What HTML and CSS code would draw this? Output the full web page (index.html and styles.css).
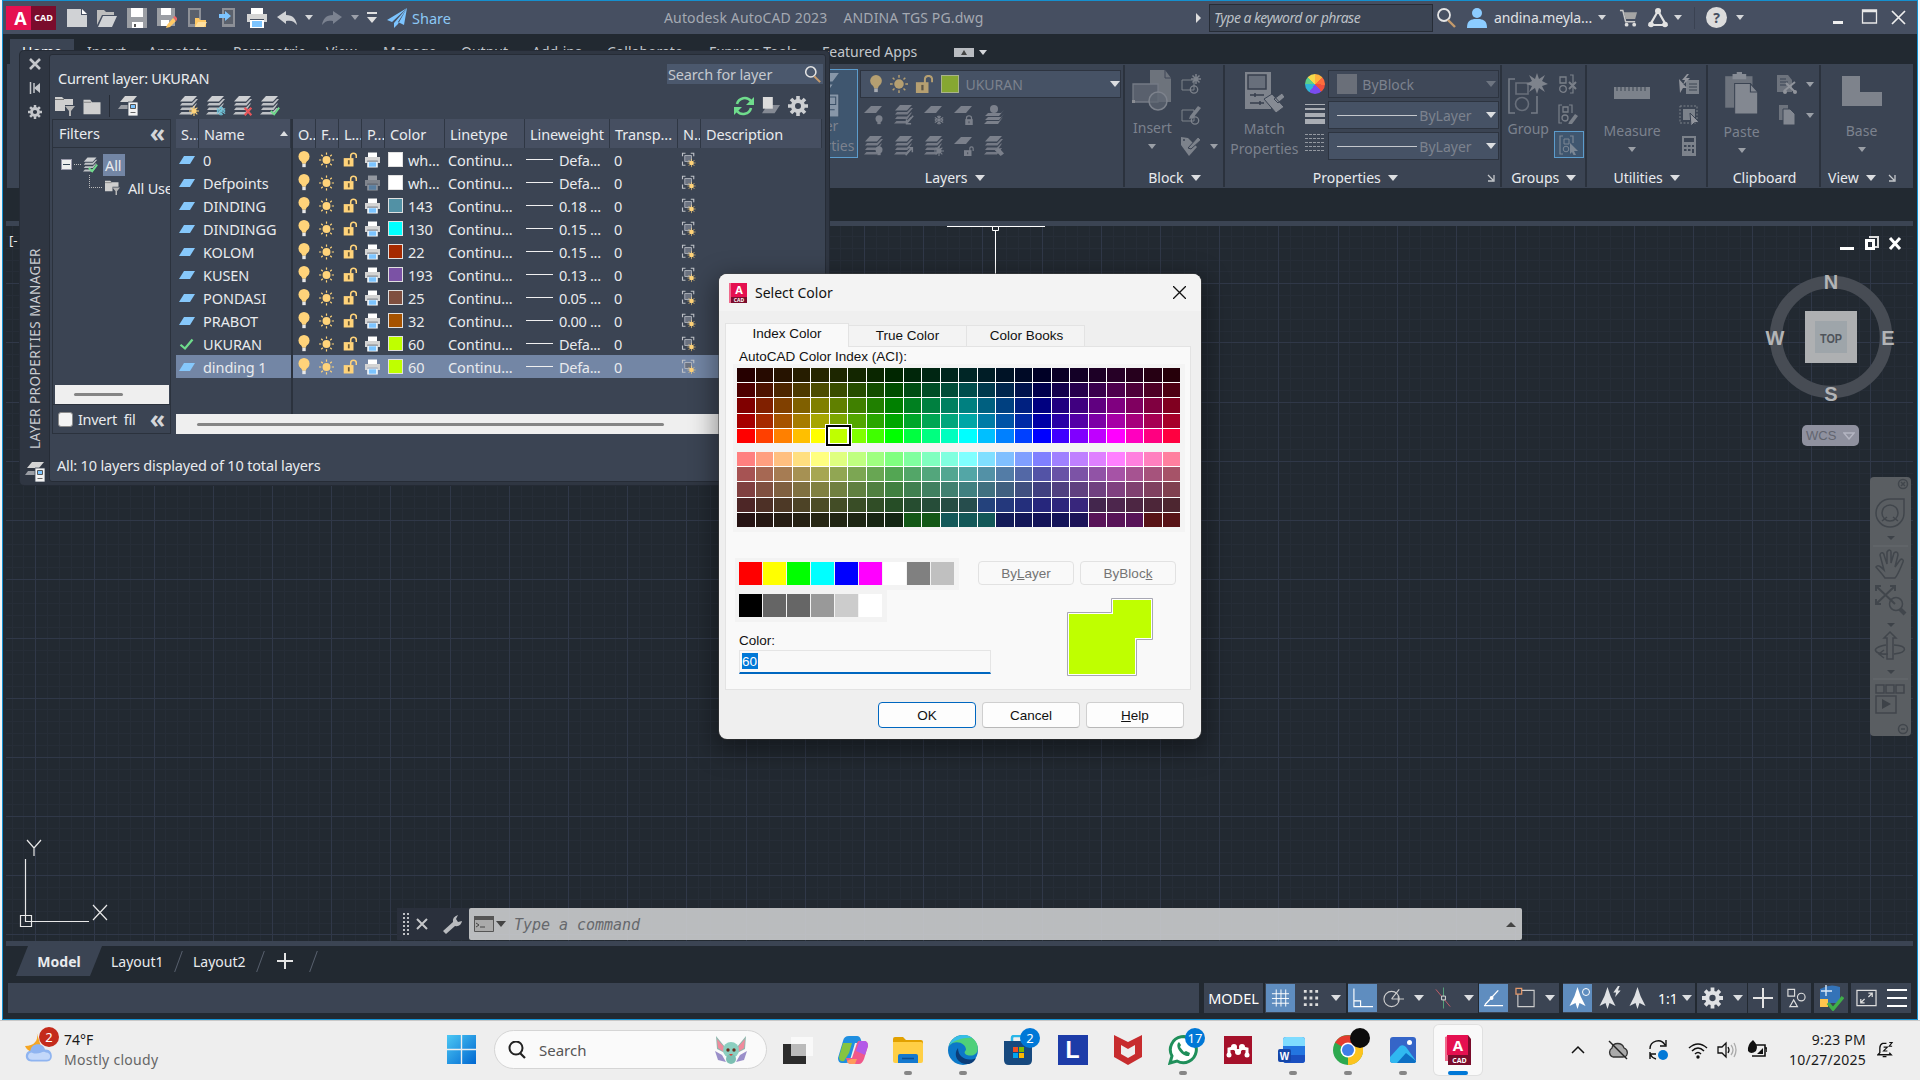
FILE: index.html
```html
<!DOCTYPE html>
<html lang="en">
<head>
<meta charset="utf-8">
<title>Autodesk AutoCAD 2023</title>
<link rel="stylesheet" href="styles.css">
</head>
<body>
<svg class="sprite" aria-hidden="true">
  <symbol id="new" viewBox="0 0 20 20"><path d="M0 1h14v6h6v12H0z" fill="currentColor"/><path d="M15 1l5 5h-5z" fill="#fff"/></symbol>
  <symbol id="open" viewBox="0 0 20 20"><path d="M0 2h7l2 2h8v3H5L0 17z" fill="#bdbdbd"/><path d="M6 8h14l-5 11H1z" fill="currentColor"/></symbol>
  <symbol id="save" viewBox="0 0 20 20"><path d="M0 0h20v20H0z" fill="#9b9ea4"/><path d="M4 0h12v9H4zM5 14h11v6H5z" fill="#fff"/><path d="M7 16h2v3H7z" fill="#555"/></symbol>
  <symbol id="saveas" viewBox="0 0 20 20"><path d="M0 0h18v18H0z" fill="#9b9ea4"/><path d="M4 0h10v7H4zM4 12h8v6H4z" fill="#fff"/><path d="M10 17l6-7 3 3-6 6-4 1z" fill="#ffc966"/><path d="M16 9l2-1 3 3-2 2z" fill="#e66"/></symbol>
  <symbol id="webopen" viewBox="0 0 20 20"><path d="M1 0h13v19H1z" fill="#8d9097"/><path d="M3 2h9v14H3z" fill="#5b616c"/><path d="M8 10h4l1 2h6v7H8z" fill="#ffc966"/><path d="M11 14h9l-3 5H8z" fill="#ffe09f"/></symbol>
  <symbol id="websave" viewBox="0 0 20 20"><path d="M5 0h13v19H5z" fill="#8d9097"/><path d="M7 2h9v14H7z" fill="#5b616c"/><path d="M2 6h6V3l6 5-6 5v-3H2z" fill="#7cc4ff"/></symbol>
  <symbol id="print" viewBox="0 0 20 20"><path d="M4 0h12v6H4z" fill="#fff"/><path d="M0 6h20v8h-3v-3H3v3H0z" fill="#d4d4d4"/><path d="M3 12h14v8H3z" fill="#fff"/><path d="M5 13h10v6H5z" fill="#7cc4ff"/></symbol>
  <symbol id="undo" viewBox="0 0 20 20"><path d="M0 9l9-6v4c7 0 10 4 11 10-3-4-6-5-11-4v3z" fill="currentColor"/></symbol>
  <symbol id="plane" viewBox="0 0 20 20"><path d="M20 0L0 12l5 2zM20 0l-3 17-6-3zM20 0L7 15v5l4-4z" fill="#7cc4ff"/></symbol>
  <symbol id="mag" viewBox="0 0 20 20"><circle cx="8" cy="7" r="6" fill="none" stroke="#e4e4e4" stroke-width="1.8"/><path d="M12 12l7 7" stroke="#c49a6c" stroke-width="2.4"/></symbol>
  <symbol id="user" viewBox="0 0 20 20"><circle cx="10" cy="5" r="5" fill="#8cccff"/><path d="M0 20c0-7 3-8 7-9h6c4 1 7 2 7 9z" fill="#8cccff"/></symbol>
  <symbol id="cart" viewBox="0 0 20 20"><path d="M1 2h3l3 12h10" fill="none" stroke="#c9c9c9" stroke-width="1.6"/><path d="M5 4h14l-2 7H7z" fill="#a5a5a5"/><circle cx="8" cy="17" r="2" fill="#ddd"/><circle cx="16" cy="17" r="2" fill="#ddd"/></symbol>
  <symbol id="adsk" viewBox="0 0 20 20"><path d="M10 3L2 17h16z" fill="none" stroke="#e2e2e2" stroke-width="2.2"/><circle cx="10" cy="3" r="3" fill="#e2e2e2"/><circle cx="3" cy="16.500" r="2.800" fill="#e2e2e2"/><circle cx="17" cy="16.500" r="2.800" fill="#e2e2e2"/></symbol>
  <symbol id="stack" viewBox="0 0 20 20"><path d="M6 0h12l-5 5.500H1z" fill="currentColor"/><path d="M3 7h10l4-4h2l-5.500 6.500H1zM3 11.500h10l4-4h1l-4.500 6.500H1zM2.500 16h10l4-4h1.500l-5 6.500H0z" fill="currentColor" opacity=".9"/></symbol>
  <symbol id="sheet" viewBox="0 0 20 20"><path d="M7 1h11l-6 7H0z" fill="currentColor"/></symbol>
  <symbol id="row-sheet" viewBox="0 0 16 8"><path d="M5 0h11l-5 8H0z" fill="#86c8fb"/></symbol>
  <symbol id="m-bulb" viewBox="0 0 10 12"><circle cx="5" cy="4.500" r="4.200" fill="currentColor"/><path d="M3 7h4v4H3z" fill="currentColor"/></symbol>
  <symbol id="m-sun" viewBox="0 0 12 12"><circle cx="6" cy="6" r="3" fill="currentColor"/><path d="M6 0v12M0 6h12M2 2l8 8M10 2l-8 8" stroke="currentColor" stroke-width="1.300"/></symbol>
  <symbol id="m-frz" viewBox="0 0 12 12"><path d="M6 .5v11M1 3l10 6M11 3L1 9M4 1.500l2 2 2-2M4 10.500l2-2 2 2M1 6l2-1M1 6l2 1M11 6L9 5M11 6L9 7" fill="none" stroke="currentColor" stroke-width="1.300"/></symbol>
  <symbol id="m-lock" viewBox="0 0 12 12"><path d="M3 6V3.500Q3 1 6 1t3 2.500V6" fill="none" stroke="currentColor" stroke-width="1.500"/><path d="M1.500 5h9v7h-9z" fill="currentColor"/><path d="M5.500 7.500h1v2.500h-1z" fill="#3b404f"/></symbol>
  <symbol id="m-unlock" viewBox="0 0 12 12"><path d="M7 6V3Q7 1 9 1t2 2v3" fill="none" stroke="currentColor" stroke-width="1.400"/><path d="M0 5h9v7H0z" fill="currentColor"/><path d="M4 7.500h1v2.500H4z" fill="#3b404f"/></symbol>
  <symbol id="m-in" viewBox="0 0 12 12"><path d="M11 1L4 9M3 5v5.500h5.500" fill="none" stroke="currentColor" stroke-width="1.800"/></symbol>
  <symbol id="m-out" viewBox="0 0 12 12"><path d="M2 11l7-8M4.500 2H10v5.500" fill="none" stroke="currentColor" stroke-width="1.800"/></symbol>
  <symbol id="m-match" viewBox="0 0 12 12"><path d="M1 5l5-3 6 7-4 3z" fill="currentColor"/></symbol>
  <symbol id="m-ok" viewBox="0 0 12 12"><path d="M1 6l4 4 6-8" fill="none" stroke="currentColor" stroke-width="2.200"/></symbol>
  <symbol id="m-del" viewBox="0 0 12 12"><path d="M2 2l8 9M10 2L2 11" stroke="currentColor" stroke-width="2.600"/></symbol>
  <symbol id="walk" viewBox="0 0 20 20"><path d="M4 8h13l3-3-5 6H1zM4 12h13l3-3-5 6H1zM3 16h12l4-4-5 7H0z" fill="currentColor"/><circle cx="10" cy="4" r="4" fill="currentColor"/><path d="M6 8h8l-2 3H4z" fill="currentColor"/></symbol>
  <symbol id="bulb" viewBox="0 0 14 20"><circle cx="7" cy="6.500" r="6.500" fill="#ffd37a"/><path d="M3 10h8l-2 5H5z" fill="#ffd37a"/><path d="M5 15h4v4H5z" fill="#e8e8e8"/></symbol>
  <symbol id="sun" viewBox="0 0 20 20"><circle cx="10" cy="10" r="5.300" fill="#ffd37a"/><path d="M10 0v3M10 17v3M0 10h3M17 10h3M3 3l2 2M15 15l2 2M17 3l-2 2M5 15l-2 2" stroke="#ffd37a" stroke-width="1.600"/></symbol>
  <symbol id="lock" viewBox="0 0 20 20"><path d="M11 9V5q0-4 4-4t4 4v3" fill="none" stroke="#ffd37a" stroke-width="2.200"/><path d="M1 8h14v12H1z" fill="#ffd37a"/><path d="M7 11h2.500v6H7z" fill="#6d5a34"/></symbol>
  <symbol id="vp" viewBox="0 0 20 20"><path d="M2 5V1h4M13 1h4v4M2 12v5h4" fill="none" stroke="#bfc2c8" stroke-width="1.500"/><path d="M5 4h9v8H5z" fill="#6b7280" stroke="#bfc2c8"/><circle cx="14" cy="14" r="3" fill="#ffd37a"/><path d="M14 8.500v11M8.500 14h11M10 10l8 8M18 10l-8 8" stroke="#ffd37a" stroke-width=".8"/></symbol>
  <symbol id="check" viewBox="0 0 20 20"><path d="M2 11l6 5L18 4" fill="none" stroke="#6fdc8c" stroke-width="3"/></symbol>
  <symbol id="gear" viewBox="0 0 20 20"><circle cx="10" cy="10" r="5" fill="none" stroke="currentColor" stroke-width="4"/><path d="M10 0v4M10 16v4M0 10h4M16 10h4M3 3l3 3M14 14l3 3M17 3l-3 3M6 14l-3 3" stroke="currentColor" stroke-width="3.600"/></symbol>
  <symbol id="filter" viewBox="0 0 20 20"><path d="M0 1h7l2 2h9v6H10v6H0z" fill="#cfcfcf"/><path d="M0 3.500h9" stroke="#777"/><path d="M10 10h10l-4 5v5h-2v-5z" fill="#b5b5b5"/></symbol>
  <symbol id="folder" viewBox="0 0 20 20"><path d="M0 2h8l2 3h10v14H0z" fill="#cfcfcf"/><path d="M0 5h9" stroke="#777"/></symbol>
  <symbol id="state" viewBox="0 0 20 20"><path d="M7 0h12l-5 6H2z" fill="#d4d4d4"/><path d="M3 9h7v4H0z" fill="#9a9da3"/><path d="M10 6h10v14H10z" fill="#f2f2f2" stroke="#3b4453" stroke-width=".8"/><path d="M12.500 8.500h5v4h-5z" fill="#7cc4ff" stroke="#555"/><path d="M12.500 16.500h5" stroke="#666"/></symbol>
  <symbol id="refresh" viewBox="0 0 20 20"><path d="M3 8a8 8 0 0 1 14-3M17 12a8 8 0 0 1-14 3" fill="none" stroke="#6fdc8c" stroke-width="2.600"/><path d="M20 1v8h-8zM0 19v-8h8z" fill="#6fdc8c"/></symbol>
  <symbol id="insert" viewBox="0 0 40 42"><path d="M18 0h15l6 8v24H18z" fill="#8d9096"/><path d="M33 0v8h6" fill="none" stroke="#41495a"/><path d="M1 14h25v18H1z" fill="#6c727d" stroke="#989ca5" stroke-width="1.300"/><circle cx="26" cy="31" r="9" fill="#747a85" fill-opacity=".7" stroke="#a5a8af" stroke-width="1.500"/><path d="M0 30h3v3H0z" fill="#bbb"/></symbol>
  <symbol id="blk1" viewBox="0 0 20 20"><path d="M1 6h12v10H1z" fill="none" stroke="currentColor"/><circle cx="13" cy="15.500" r="3.700" fill="none" stroke="currentColor" stroke-width="1.300"/><path d="M15 0v10M10 5h10M11.500 1.500l7 7M18.500 1.500l-7 7" stroke="currentColor" stroke-width="1.500"/></symbol>
  <symbol id="blk2" viewBox="0 0 20 20"><path d="M1 5h12v11H1z" fill="none" stroke="currentColor"/><circle cx="14" cy="15.500" r="3.700" fill="none" stroke="currentColor" stroke-width="1.300"/><path d="M9 11l8-10 3 2-8 10-4 1z" fill="currentColor"/></symbol>
  <symbol id="tag" viewBox="0 0 20 20"><path d="M0 1l7 1 9 9-8 9L0 9z" fill="currentColor"/><path d="M7 12L17 1l3 3-10 9z" fill="currentColor" stroke="#3b4453"/><circle cx="3" cy="4" r="1" fill="#3b4453"/></symbol>
  <symbol id="match" viewBox="0 0 40 42"><path d="M1 1h26v37H1z" fill="#a8aab0"/><path d="M4 4h18v14H4z" fill="#858a94" stroke="#353c4a" stroke-width="1.500"/><path d="M6 24h14M6 32h14M11 22v4M16 30v4" stroke="#353c4a" stroke-width="1.500"/><path d="M20 28l8-5 12 13-8 6zM30 28l8-6 3 4-7 6z" fill="#b5b7bc" stroke="#3b4453"/></symbol>
  <symbol id="groupic" viewBox="0 0 40 42"><path d="M7 7H1v34h6M23 41h6V24" fill="none" stroke="#999da6" stroke-width="1.600"/><path d="M8 11h12v11H8z" fill="none" stroke="#858a94" stroke-width="1.600"/><circle cx="14" cy="32" r="6.500" fill="none" stroke="#858a94" stroke-width="1.600"/><path d="M29 1l2 6 6-4-3 6 6 3-6 2 3 6-6-4-2 6-2-6-6 4 3-6-6-2 6-3-3-6 6 4z" fill="#a8aab0"/></symbol>
  <symbol id="grp-x" viewBox="0 0 20 20"><path d="M12 1h3v18h-3" fill="none" stroke="currentColor" stroke-width="1.200"/><path d="M2 3h6v6H2z" fill="none" stroke="currentColor" stroke-width="1.300"/><circle cx="5" cy="15" r="3.300" fill="none" stroke="currentColor" stroke-width="1.300"/><path d="M11 8l7 7M18 8l-7 7" stroke="currentColor" stroke-width="2"/></symbol>
  <symbol id="grp-edit" viewBox="0 0 20 20"><path d="M4 1H1v18h3M11 1h3v8" fill="none" stroke="currentColor" stroke-width="1.200"/><path d="M5 3h5v5H5z" fill="none" stroke="currentColor" stroke-width="1.300"/><circle cx="7" cy="14" r="3" fill="none" stroke="currentColor" stroke-width="1.300"/><path d="M11 18l6-8 3 2-6 8-4 1z" fill="currentColor"/></symbol>
  <symbol id="grp-sel" viewBox="0 0 20 20"><path d="M4 1H1v18h3M11 1h3v7" fill="none" stroke="currentColor" stroke-width="1.200"/><path d="M5 4h5v5H5z" fill="none" stroke="currentColor"/><circle cx="7" cy="14" r="2.800" fill="none" stroke="currentColor"/><path d="M11 8l8 8h-4l2 4-2 1-2-4-2 2z" fill="currentColor"/></symbol>
  <symbol id="paste" viewBox="0 0 32 40"><path d="M0 4h26v30H0z" fill="#8c9098"/><path d="M7 2h4V0h5v2h4v5H7z" fill="#b5b7bc"/><path d="M9 11h15l7 8v21H9z" fill="#b0b2b8" stroke="#3b4453"/><path d="M24 11v8h7" fill="none" stroke="#3b4453"/></symbol>
  <symbol id="copy" viewBox="0 0 20 20"><path d="M2 0h9v15H2z" fill="#8c9098"/><path d="M6 4h7l5 5v11H6z" fill="#b0b2b8" stroke="#3b4453"/></symbol>
  <symbol id="cut" viewBox="0 0 20 20"><path d="M0 1h11l4 5v12H0z" fill="#8c9098"/><path d="M3 5h6M3 8h8M3 11h6" stroke="#3b4453"/><path d="M7 17l11-9M9 9l9 9" stroke="#c5c5c8" stroke-width="2"/><circle cx="18" cy="18" r="2" fill="#c5c5c8"/><circle cx="8" cy="18" r="2" fill="#c5c5c8"/></symbol>
  <symbol id="quick" viewBox="0 0 20 20"><path d="M7 6h13v14H7z" fill="#a5a8ae"/><path d="M10 10h8M10 13h8M10 16h8" stroke="#3b4453"/><path d="M0 5l8 9H4l-3 5zM8 0L3 6h3l-2 5 7-7H7l3-4z" fill="#c8c8cb"/></symbol>
  <symbol id="selall" viewBox="0 0 20 20"><path d="M1 1h17v17H1z" fill="none" stroke="currentColor" stroke-dasharray="2 1.500"/><path d="M4 4h12v11H4z" fill="currentColor"/><path d="M11 8l9 9-5 1-3 3z" fill="#c8c8cb" stroke="#3b4453"/></symbol>
  <symbol id="calc" viewBox="0 0 20 20"><path d="M3 0h14v20H3z" fill="#a5a8ae"/><path d="M5 2h10v4H5zM5 9h2.500v2H5zM9 9h2.500v2H9zM13 9h2v2h-2zM5 13h2.500v2H5zM9 13h2.500v2H9zM13 13h2v4h-2z" fill="#3b4453"/></symbol>
  <symbol id="wrench" viewBox="0 0 20 20"><path d="M1 17L11 8q-1-5 5-7l-2 4 2 3 4-1q-1 6-7 5L4 20z" fill="#b9bbbf"/></symbol>
  <symbol id="person" viewBox="0 0 20 22"><path d="M10 0l3 9 5 10-6-3-2 6-2-6-6 3 5-10z" fill="currentColor"/></symbol>
  <symbol id="acad" viewBox="0 0 26 30"><path d="M0 2L5 0v26H0z" fill="#f06a8c"/><path d="M3 0h20l3 4v26H3z" fill="#7a0c2c"/><path d="M2 0h21v20H2z" fill="#e51050"/></symbol>
</svg>

<div class="window">
  <header class="titlebar">
    <div class="brand"><b>A</b><span>CAD</span></div>
    <div class="quick">
      <svg><use href="#new"/></svg><svg><use href="#open"/></svg><svg><use href="#save"/></svg><svg><use href="#saveas"/></svg><svg><use href="#webopen"/></svg><svg><use href="#websave"/></svg><svg><use href="#print"/></svg>
      <svg class="undo"><use href="#undo"/></svg><i class="caret"></i><svg class="redo"><use href="#undo"/></svg><i class="caret dim"></i><i class="menu-caret"></i>
      <svg class="plane"><use href="#plane"/></svg><span class="share">Share</span>
    </div>
    <div class="app-title"><span>Autodesk AutoCAD 2023</span><span>ANDINA TGS PG.dwg</span></div>
    <div class="account">
      <i class="play"></i><div class="keyword">Type a keyword or phrase</div>
      <svg><use href="#mag"/></svg><svg class="usr"><use href="#user"/></svg><span class="user-name">andina.meyla...</span><i class="caret"></i>
      <svg class="cart"><use href="#cart"/></svg><svg class="adsk"><use href="#adsk"/></svg><i class="caret"></i><span class="rule"></span><span class="help">?</span><i class="caret"></i>
    </div>
    <svg class="winbtns" viewBox="0 0 78 20"><path d="M1 14.500h10" stroke="#eee" stroke-width="3"/><path d="M30.500 2h14v13h-14zM30 3.500h15" fill="none" stroke="#e8e8e8" stroke-width="1.300"/><path d="M60 3l13 13M73 3L60 16" stroke="#eee" stroke-width="1.700"/></svg>
  </header>

  <nav class="ribbon-tabs">
    <span class="tab-home">Home</span><span class="t2">Insert</span><span class="t3">Annotate</span><span class="t4">Parametric</span><span class="t5">View</span><span class="t6">Manage</span><span class="t7">Output</span><span class="t8">Add-ins</span><span class="t9">Collaborate</span><span class="t10">Express Tools</span><span class="t11">Featured Apps</span>
    <svg class="ribbon-min" viewBox="0 0 20 9"><path d="M0 0h20v9H0z" fill="#b9bcc1"/><path d="M7 7h6l-3-5z" fill="#444"/></svg><i class="caret"></i>
  </nav>

  <section class="ribbon">
    <div class="panel layers">
      <div class="panel-body">
        <div class="layer-props"><svg viewBox="0 0 40 42"><path d="M12 0h26l-6 8H6zM8 11h24l-5 7H2z" fill="#8796a8"/><path d="M20 20h18v22H20z" fill="#8796a8" stroke="#3b5068"/><path d="M23 23h12v7H23zM24 35h10" stroke="#3b5068" fill="none"/></svg><span>Layer</span><span>Properties</span></div>
        <div class="layer-tools">
          <div class="combo layer-combo"><svg class="b"><use href="#bulb"/></svg><svg><use href="#sun"/></svg><svg><use href="#lock"/></svg><i class="chip"></i><span>UKURAN</span><i class="drop"></i></div>
          <div class="tool-row" id="tools-a"></div>
          <div class="tool-row" id="tools-b"></div>
        </div>
      </div>
      <div class="panel-title">Layers <i class="drop"></i></div>
    </div>
    <div class="panel block">
      <div class="panel-body dimmed">
        <div class="big"><svg><use href="#insert"/></svg><span>Insert</span><i class="caret"></i></div>
        <div class="small-col"><svg><use href="#blk1"/></svg><svg><use href="#blk2"/></svg><div><svg><use href="#tag"/></svg><i class="caret"></i></div></div>
      </div>
      <div class="panel-title">Block <i class="drop"></i></div>
    </div>
    <div class="panel properties">
      <div class="panel-body">
        <div class="big dimmed"><svg><use href="#match"/></svg><span>Match</span><span>Properties</span></div>
        <div class="prop-icons"><i class="wheel"></i><i class="weights"></i><i class="dashes"></i></div>
        <div class="combos">
          <div class="combo off"><i class="gray-chip"></i><span>ByBlock</span><i class="drop"></i></div>
          <div class="combo"><i class="ln"></i><span>ByLayer</span><i class="drop"></i></div>
          <div class="combo"><i class="ln"></i><span>ByLayer</span><i class="drop"></i></div>
        </div>
      </div>
      <div class="panel-title">Properties <i class="drop"></i><svg class="launch" viewBox="0 0 8 8"><path d="M1 1l5 5M7 1v6H1" fill="none" stroke="#c5c8cc" stroke-width="1.300"/></svg></div>
    </div>
    <div class="panel groups">
      <div class="panel-body">
        <div class="big dimmed"><svg><use href="#groupic"/></svg><span>Group</span></div>
        <div class="small-col"><svg class="faded"><use href="#grp-x"/></svg><svg class="faded"><use href="#grp-edit"/></svg><span class="pressed"><svg class="faded"><use href="#grp-sel"/></svg></span></div>
      </div>
      <div class="panel-title">Groups <i class="drop"></i></div>
    </div>
    <div class="panel utilities">
      <div class="panel-body dimmed">
        <div class="big"><svg viewBox="0 0 40 40"><path d="M2 14h36v12H2z" fill="#a5a8ae"/><path d="M5 14v4M9 14v4M13 14v4M17 14v4M21 14v4M25 14v4M29 14v4M33 14v4" stroke="#3b4453"/></svg><span>Measure</span><i class="caret"></i></div>
        <div class="small-col"><svg><use href="#quick"/></svg><svg><use href="#selall"/></svg><svg><use href="#calc"/></svg></div>
      </div>
      <div class="panel-title">Utilities <i class="drop"></i></div>
    </div>
    <div class="panel clipboard">
      <div class="panel-body dimmed">
        <div class="big"><svg><use href="#paste"/></svg><span>Paste</span><i class="caret"></i></div>
        <div class="small-col"><div><svg><use href="#cut"/></svg><i class="caret"></i></div><div><svg><use href="#copy"/></svg><i class="caret"></i></div></div>
      </div>
      <div class="panel-title">Clipboard</div>
    </div>
    <div class="panel view">
      <div class="panel-body dimmed">
        <div class="big"><svg viewBox="0 0 40 40"><path d="M0 4h18v16h22v14H0z" fill="#a8aab0"/></svg><span>Base</span><i class="caret"></i></div>
      </div>
      <div class="panel-title">View <i class="drop"></i><svg class="launch" viewBox="0 0 8 8"><path d="M1 1l5 5M7 1v6H1" fill="none" stroke="#c5c8cc" stroke-width="1.300"/></svg></div>
    </div>
  </section>
  <div class="file-tabs"></div>

  <main class="drawing">
    <span class="vp-label">[-</span>
    <svg class="wall" viewBox="0 0 98 50"><path d="M0 .5h98M48.500 5v45" stroke="#fff" fill="none"/><path d="M45.500 .5h6v4h-6z" fill="#222931" stroke="#fff"/></svg>
    <svg class="docbtns" viewBox="0 0 64 18"><path d="M0 12h14v3H0z" fill="#fff"/><path d="M29 2h9v10h-3" fill="none" stroke="#ddd" stroke-width="2"/><path d="M26.500 5.500h7v8h-7z" fill="none" stroke="#fff" stroke-width="3"/><path d="M50 3l10 11M60 3L50 14" stroke="#fff" stroke-width="3"/></svg>
    <svg class="cube" viewBox="0 0 134 140"><circle cx="67" cy="68" r="55" fill="none" stroke="#474c54" stroke-width="12.500"/><path d="M41 42h52v52H41z" fill="#aeb0b2"/><path d="M51 52h32v32H51z" fill="#9ea5aa"/><text x="67" y="73.500" class="top" textLength="22" lengthAdjust="spacingAndGlyphs">TOP</text><g class="dir"><text x="67" y="19.500">N</text><text x="67" y="132">S</text><text x="11" y="76">W</text><text x="124" y="76">E</text></g></svg>
    <div class="wcs">WCS<svg viewBox="0 0 12 8"><path d="M1 1h10L6 7z" fill="none" stroke="#b4b5c2" stroke-width="1.400"/></svg></div>
    <svg class="navbar" viewBox="0 0 41 259"><rect width="41" height="259" rx="4" fill="#5a5e62"/><g fill="none" stroke="#41464c" stroke-width="1.500"><circle cx="33" cy="7" r="4.500"/><path d="M31 5l4 4M35 5l-4 4"/><path d="M20 22h14v14a14 14 0 1 1-14-14z"/><circle cx="20" cy="36" r="8"/><path d="M12 44l5-4M28 44l-5-4"/><path d="M15 101c-3-5-6-7-9-11 2-3 5 0 8 3L10 78c1-4 4-2 4 0l3 9V75c2-3 4-2 4 0v11l3-10c2-2 4-1 4 2l-3 12 5-7c2-2 4 0 3 2-3 7-5 13-8 16z"/><path d="M6 109l19 18M25 109L6 127M6 114v-5h5M20 109h5v5M6 122v5h5" stroke-width="2"/><circle cx="26" cy="127" r="6.500"/><path d="M30 132l5 5" stroke-width="4"/><path d="M17 182v-21h-3l6-6 6 6h-3v21z"/><path d="M16 168C-2 171 6 178 18 177M24 177c14-2 14-8 0-9M14 173l-5 4 5 4"/><path d="M6 208h8v8H6zM16 208h8v8h-8zM26 208h8v8h-8zM6 219h20v17H6z"/><circle cx="33" cy="252" r="4.500"/><path d="M31 252h4"/></g><path d="M12 222l9 5-9 5zM17 59h8l-4 4zM17 146h8l-4 4zM17 193h8l-4 4z" fill="#3d4248"/><path d="M3 69h35M3 202h35" stroke="#666a6e"/></svg>
    <svg class="ucs" viewBox="0 0 92 90"><path d="M6.500 20v62.500H70M1.500 76.500h11v11h-11zM8 1l7 8 7-8M15 9v8M74 66l14 15M88 66L74 81" fill="none" stroke="#e8e8e8" stroke-width="1.200"/></svg>
    <div class="command">
      <div class="handle"><svg class="grip" viewBox="0 0 8 22"><path d="M2 0v22M6 0v22" stroke="#bfc1c5" stroke-width="2" stroke-dasharray="2 2"/></svg><svg class="cx" viewBox="0 0 12 12"><path d="M1 1l10 10M11 1L1 11" stroke="#c6c7ca" stroke-width="2"/></svg><svg class="wr"><use href="#wrench"/></svg></div>
      <div class="prompt"><svg viewBox="0 0 20 16"><path d="M.5.5h19v15H.5z" fill="#aaa" stroke="#555"/><path d="M0 0h20v4H0z" fill="#555"/><path d="M2 7l3 2-3 2M6 11h5" stroke="#444" fill="none"/></svg><i class="drop"></i><span>Type a command</span><i class="up"></i></div>
    </div>
  </main>

  <nav class="layout-tabs">
    <span class="model">Model</span><span class="l1">Layout1</span><i class="slash"></i><span class="l2">Layout2</span><i class="slash"></i><b class="plus"></b><i class="slash"></i>
  </nav>

  <footer class="status">
    <div class="st blank"></div>
    <div class="st mdl">MODEL</div>
    <div class="st g1"><span class="on"><svg viewBox="0 0 20 20"><path d="M5.500 1v18M10.500 1v18M15.500 1v18M1 5.500h18M1 10.500h18M1 15.500h18" stroke="#fff"/></svg></span><span><svg viewBox="0 0 20 20"><path d="M3 3h16M3 10h16M3 17h16" stroke="#ddd" stroke-width="3" stroke-dasharray="3 3"/></svg></span><i class="drop"></i></div>
    <div class="st g2"><span class="on"><svg viewBox="0 0 22 22"><path d="M2 1v19h20M2 14h7v6" fill="none" stroke="#fff" stroke-width="1.200"/></svg></span><span><svg viewBox="0 0 22 22"><circle cx="9" cy="12" r="8" fill="none" stroke="#ccc" stroke-width="1.200"/><path d="M9 12h13M9 12l8-10M16 9v6" stroke="#ccc" stroke-width="1.200"/></svg></span><i class="drop"></i><span><svg viewBox="0 0 22 22"><path d="M11 0v22" stroke="#57a37a"/><path d="M3 2l15 18" stroke="#c45c68"/><path d="M9 9h4v4H9z" fill="#3b4453" stroke="#ddd"/></svg></span><i class="drop"></i></div>
    <div class="st g3"><span class="on"><svg viewBox="0 0 22 22"><path d="M1 19h20M2 18L16 3" stroke="#fff" stroke-width="1.400"/><circle cx="9" cy="11" r="2" fill="#fff"/></svg></span><span><svg viewBox="0 0 22 22"><path d="M5 3h15v17H3V6" fill="none" stroke="#ccc" stroke-width="1.200"/><path d="M1 1h6v6H1z" fill="#3b4453" stroke="#e69a6c" stroke-width="1.300"/></svg></span><i class="drop"></i></div>
    <div class="st g4"><span class="on"><svg><use href="#person"/></svg><i class="ring"></i></span><span><svg><use href="#person"/></svg><svg class="bolt" viewBox="0 0 8 12"><path d="M5 0L0 7h3l-1 5 6-7H5l2-5z" fill="#dfe1e4"/></svg></span><span><svg><use href="#person"/></svg></span><em>1:1</em><i class="drop"></i></div>
    <div class="st g5"><svg><use href="#gear"/></svg><i class="drop"></i></div>
    <div class="st g6"><b class="plus"></b></div>
    <div class="st g7"><svg viewBox="0 0 22 22"><path d="M2 2h7v7H2zM8 13l4 7H4z" fill="none" stroke="#ddd" stroke-width="1.200"/><circle cx="16" cy="10" r="4" fill="none" stroke="#ddd" stroke-width="1.200"/></svg></div>
    <div class="st g8"><svg viewBox="0 0 26 26"><path d="M2 4q10-6 20-2v16H2z" fill="#3473b8"/><path d="M2 14h8v8H2z" fill="#ffc44d"/><path d="M8 0v11M3 6h11" stroke="#dbe9f7" stroke-width="1.400"/><path d="M10 18l5 6L25 12" fill="none" stroke="#3fae49" stroke-width="3.500"/></svg></div>
    <div class="st g9"><svg viewBox="0 0 22 18"><path d="M1 1h20v16H1z" fill="none" stroke="#ddd" stroke-width="1.300"/><path d="M13 8l4-4M13 4h4v4M9 10l-4 4M5 10v4h4" fill="none" stroke="#ddd" stroke-width="1.300"/></svg><i class="burger"></i></div>
  </footer>
</div>

<aside class="palette">
  <div class="rail">
    <svg viewBox="0 0 12 12"><path d="M1 1l10 10M11 1L1 11" stroke="#c4c6ca" stroke-width="2.600"/></svg>
    <svg viewBox="0 0 12 12"><path d="M1.500 0v12M5 1v10" stroke="#c4c6ca" stroke-width="1.500"/><path d="M11 1v10L5 6z" fill="#c4c6ca"/></svg>
    <svg class="rail-gear"><use href="#gear"/></svg>
    <span class="rail-title">LAYER PROPERTIES MANAGER</span>
    <svg class="rail-icon"><use href="#state"/></svg>
  </div>
  <div class="pal-body">
    <div class="pal-top"><span>Current layer: UKURAN</span><div class="layer-search"><span>Search for layer</span><svg><use href="#mag"/></svg></div></div>
    <div class="pal-tools">
      <svg><use href="#filter"/></svg><svg class="fo"><use href="#folder"/></svg><i></i><svg class="sta"><use href="#state"/></svg>
      <span class="stk"><svg><use href="#stack"/></svg><svg class="mark c-sun"><use href="#m-sun"/></svg></span><span class="stk"><svg><use href="#stack"/></svg><svg class="mark c-frz"><use href="#m-frz"/></svg></span><span class="stk"><svg><use href="#stack"/></svg><svg class="mark c-del"><use href="#m-del"/></svg></span><span class="stk"><svg><use href="#stack"/></svg><svg class="mark c-ok"><use href="#m-ok"/></svg></span>
      <svg class="refr"><use href="#refresh"/></svg><svg class="ovr" viewBox="0 0 20 20"><path d="M6 9h14l-6 9H0z" fill="#858a94"/><path d="M1 0h11v13H1z" fill="#dcdcdc"/></svg><svg class="gr"><use href="#gear"/></svg>
    </div>
    <div class="pal-main">
      <div class="filters">
        <div class="filters-head"><span>Filters</span><b>«</b></div>
        <div class="tree">
          <div class="node"><i class="minus"></i><i class="dots"></i><span class="stk"><svg><use href="#stack"/></svg><svg class="mark c-ok"><use href="#m-ok"/></svg></span><span class="all">All</span></div>
          <div class="node child"><i class="elbow"></i><svg><use href="#filter"/></svg><span>All Use</span></div>
        </div>
        <div class="scroll small"><i></i></div>
        <div class="invert"><i></i><span>Invert&nbsp; fil</span><b>«</b></div>
      </div>
      <div class="grid">
        <div class="row head"><span>S...</span><span class="nm">Name<i class="up"></i></span><i class="gap"></i><span>O..</span><span>F...</span><span>L...</span><span>P...</span><span>Color</span><span>Linetype</span><span>Lineweight</span><span>Transp...</span><span>N..</span><span>Description</span></div>
        <div id="rows"></div>
        <div class="row filler"><i class="gap"></i></div>
        <div class="scroll"><i></i></div>
      </div>
    </div>
    <div class="pal-status">All: 10 layers displayed of 10 total layers</div>
  </div>
</aside>

<section class="dialog">
  <header><span class="dlg-logo"><b>A</b><em>CAD</em></span><span class="dlg-title">Select Color</span><svg class="x" viewBox="0 0 12 12"><path d="M0 0l12 12M12 0L0 12" stroke="#111" stroke-width="1.200"/></svg></header>
  <div class="dtabs"><span class="cur">Index Color</span><span>True Color</span><span>Color Books</span></div>
  <div class="dpanel">
    <label>AutoCAD Color Index (ACI):</label>
    <div class="aci"><div class="cells" id="aci-top"></div><div class="cells" id="aci-bottom"></div></div>
    <div class="lower">
      <div class="left"><div class="swatches" id="std"></div><div class="swatches" id="gray"></div>
        <label>Color:</label><div class="field"><span>60</span></div></div>
      <div class="right"><div class="by"><span>By<u>L</u>ayer</span><span>ByBloc<u>k</u></span></div>
        <svg class="preview" viewBox="0 0 86 78"><path d="M.5 14.500h44V.5h41v41h-16v36H.5z" fill="#fff" stroke="#a7a7b3"/><path d="M2 16h44V2h38v38H68v36H2z" fill="#bfff00"/></svg></div>
    </div>
  </div>
  <div class="buttons"><span class="ok">OK</span><span>Cancel</span><span><u>H</u>elp</span></div>
</section>

<div class="taskbar">
  <div class="weather"><svg viewBox="0 0 34 36"><path d="M13 4c2 8-3 14-13 14 3 8 14 8 18 2z" fill="#f5a623"/><path d="M7 35c-8 0-8-11-1-12 1-9 14-9 16-1 9-1 10 13 2 13z" fill="#8fb4f0"/><path d="M8 33c-6 0-6-7-1-8 9 4 12-3 16 0 6 0 6 8 1 8z" fill="#c3d8fa"/></svg><b>2</b><div><span>74°F</span><span class="sub">Mostly cloudy</span></div></div>
  <svg class="win" viewBox="0 0 30 30"><defs><linearGradient id="wg" x2="1" y2="1"><stop stop-color="#4cc8f4"/><stop offset="1" stop-color="#0067d1"/></linearGradient></defs><path d="M0 0h14.300v14.300H0zM15.700 0H30v14.300H15.700zM0 15.700h14.300V30H0zM15.700 15.700H30V30H15.700z" fill="url(#wg)"/></svg>
  <div class="search"><svg viewBox="0 0 18 18"><circle cx="8" cy="7" r="6.500" fill="none" stroke="#222" stroke-width="2"/><path d="M12 12l5 5" stroke="#222" stroke-width="2.200"/></svg><span>Search</span>
    <svg class="pet" viewBox="0 0 32 28"><path d="M7 19L0 15l3 9 8 2zM25 19l7-4-3 9-8 2z" fill="#9a8fc9"/><path d="M10 11L1 0l1 13 8 4zM22 11l9-11-1 13-8 4z" fill="#8fb8ae"/><path d="M9 11L2 3l1 9 6 4zM23 11l7-8-1 9-6 4z" fill="#f08a9c"/><circle cx="16" cy="14" r="8" fill="#8ccfc0"/><ellipse cx="16" cy="23" rx="5" ry="5" fill="#7cbfb2"/><circle cx="13" cy="14" r="1.700" fill="#6b2d1d"/><circle cx="19" cy="14" r="1.700" fill="#6b2d1d"/><path d="M14 18h4l-2 2z" fill="#d8433a"/></svg></div>
  <div class="apps">
    <span><svg viewBox="0 0 30 30"><path d="M0 9h23v20H0z" fill="#2c2c2c"/><path d="M8 2h22v19H8z" fill="#f9f9f9"/><path d="M8 9h15v12H8z" fill="#bbb"/></svg></span>
    <span><svg viewBox="0 0 30 30"><path d="M11 1h8q3 0 4 4l1 3h-7l-5 17q-1 3-4 3H4q-4 0-4-5L5 6q1-5 6-5z" fill="#1f8fe0"/><path d="M5 8l-4 14q0 5 5 4l5-8 3-10z" fill="#86c440"/><path d="M21 29h-8q-3 0-4-3l-1-3h6l5-15q1-3 4-2h3q4 0 4 5l-4 13q-2 5-5 5z" fill="#f0588a"/><path d="M23 6h3q4 0 4 5l-3 9-9-4 3-9z" fill="#b35ae8"/><path d="M13 24h6l-2 5h-4q-3 0-4-3z" fill="#ff9b5a"/></svg></span>
    <span class="run"><svg viewBox="0 0 30 30"><path d="M0 4q0-2 2-2h8l3 3h15q2 0 2 2v5H0z" fill="#e2a100"/><path d="M0 7h28q2 0 2 2v17q0 2-2 2H2q-2 0-2-2z" fill="#ffcf45"/><path d="M5 21q0-2 2-2h16q2 0 2 2v7H5z" fill="#1479cf"/><path d="M9 23.500h12" stroke="#0a4f94" stroke-width="1.600"/></svg></span>
    <span class="run"><svg viewBox="0 0 30 30"><circle cx="15" cy="15" r="15" fill="#0c78c8"/><path d="M1 11C4-2 24-4 29 9c3 9-3 13-10 11-3-1-3-3-1-5C18 8 7 4 1 11z" fill="#4fd07a"/><path d="M1 11C4 0 18-3 24 3 17 2 5 5 1 11z" fill="#36bde8"/><path d="M10 13c-6 8 1 17 11 16 4-1 6-4 7-6-8 4-18 0-18-10z" fill="#0b3d78"/></svg></span>
    <span><svg viewBox="0 0 30 30"><path d="M9 6V3q0-2 2-2h8q2 0 2 2v3" fill="none" stroke="#29b6e8" stroke-width="2.500"/><path d="M1 6h28v19q0 5-5 5H6q-5 0-5-5z" fill="#17497e"/><path d="M10 12h5v5h-5z" fill="#f25022"/><path d="M16 12h5v5h-5z" fill="#7fba00"/><path d="M10 18h5v5h-5z" fill="#00a4ef"/><path d="M16 18h5v5h-5z" fill="#ffb900"/></svg><b>2</b></span>
    <span><i class="el">L</i></span>
    <span><svg viewBox="0 0 30 30"><path d="M1 0l14 7L29 0v22l-14 8-14-8zM8 10v9l7 4 7-4v-9l-7 4z" fill="#c72c2e" fill-rule="evenodd"/></svg></span>
    <span class="run"><svg viewBox="0 0 30 30"><path d="M2 28l2-7a13 13 0 1 1 5 5z" fill="#fff" stroke="#1f8f5a" stroke-width="3"/><path d="M10 8c-3 5 5 14 11 13l1-3-4-2-2 1-4-5 1-2-2-3z" fill="#1f8f5a"/></svg><b>17</b></span>
    <span><svg viewBox="0 0 30 30"><path d="M1 1h28v28H1z" fill="#a5102a"/><path d="M6 20V14l5-1 4 4 4-4 5 1v6" fill="none" stroke="#fff" stroke-width="3"/><circle cx="11" cy="12" r="3" fill="#fff"/><circle cx="19" cy="12" r="3" fill="#fff"/><circle cx="15" cy="17" r="3" fill="#fff"/><circle cx="6" cy="20" r="2.500" fill="#fff"/><circle cx="24" cy="20" r="2.500" fill="#fff"/></svg></span>
    <span class="run"><svg viewBox="0 0 30 30"><rect x="5" y="2" width="22" height="26" rx="3" fill="#2375e0"/><path d="M5 11V5q0-3 3-3h16q3 0 3 3v6z" fill="#7fdcff"/><path d="M5 20h22v5q0 3-3 3H8q-3 0-3-3z" fill="#1a4fc0"/><rect x="0" y="14" width="13" height="13" rx="2" fill="#1546a8"/><text x="6.500" y="24.500" class="word" text-anchor="middle">W</text></svg></span>
    <span class="run"><svg viewBox="0 0 30 30"><circle cx="15" cy="15" r="15" fill="#2da94f"/><path d="M15 15L2 7.500A15 15 0 0 1 28 8z" fill="#e33b2e"/><path d="M15 15L28.500 8A15 15 0 0 1 15 30z" fill="#fcc31e"/><circle cx="15" cy="15" r="7.500" fill="#fff"/><circle cx="15" cy="15" r="6" fill="#3f7ee8"/></svg><b class="dark"></b></span>
    <span class="run"><svg viewBox="0 0 30 30"><rect x="2" y="2" width="26" height="26" rx="3" fill="#3565c8"/><path d="M2 22l10-11q3-2 6 1l10 14q0 2-3 2H5q-3 0-3-3z" fill="#30b8f0"/><path d="M9 28l9-10 10 8q0 2-3 2z" fill="#0d6fc4"/><circle cx="21.500" cy="7.500" r="2.500" fill="#fff"/></svg></span>
    <span class="active"><svg class="acad" viewBox="0 0 26 30"><use href="#acad" width="26" height="30"/><text x="13" y="16" class="logo-a" text-anchor="middle">A</text><text x="14.500" y="27.500" class="logo-cad" text-anchor="middle">CAD</text></svg></span>
  </div>
  <div class="tray">
    <svg viewBox="0 0 14 14"><path d="M1 10l6-6 6 6" fill="none" stroke="#111" stroke-width="1.500"/></svg>
    <svg class="t20" viewBox="0 0 20 20"><path d="M5 17a5 5 0 0 1-1-9c1-6 10-6 12 0 5 2 4 9-1 9z" fill="#aaa" stroke="#333" stroke-width="1.300"/><path d="M1 1l18 18" stroke="#222" stroke-width="1.500"/></svg>
    <svg class="t20" viewBox="0 0 20 20"><path d="M2 9A8 8 0 0 1 17 5M18 0v6h-6M2 12v7M2 14h6M2 14q2 4 6 5" fill="none" stroke="#111" stroke-width="1.400"/><circle cx="15" cy="15" r="5" fill="#0078d7"/></svg>
    <svg class="t20 wifi" viewBox="0 0 20 20"><path d="M1 8q9-8 18 0M4 11q6-6 12 0M7 14q3-3 6 0" fill="none" stroke="#111" stroke-width="1.500"/><circle cx="10" cy="17" r="1.700" fill="#111"/></svg>
    <svg class="t20 vol" viewBox="0 0 20 20"><path d="M1 7h4l4-4v14l-4-4H1z" fill="none" stroke="#111" stroke-width="1.300"/><path d="M11 7q2 3 0 6" fill="none" stroke="#111" stroke-width="1.300"/><path d="M14 5q4 5 0 10M17 3q4 7 0 14" fill="none" stroke="#aaa" stroke-width="1.300"/></svg>
    <svg class="t20 bat" viewBox="0 0 20 20"><path d="M9 5h9v11H5M18 8h2v4" fill="none" stroke="#111" stroke-width="1.600"/><path d="M6 0q6 6 3 11-5 4-8 0Q0 5 6 0zM10 14l6-6v6z" fill="#111"/></svg>
    <div class="clock"><span>9:23 PM</span><span>10/27/2025</span></div>
    <svg class="bell" viewBox="0 0 18 18"><path d="M10 2H6Q3 3 3 7v5l-2 2h14l-2-2M6 16h4" fill="none" stroke="#111" stroke-width="1.400"/><path d="M7 6h4l-4 4h4M13 1h3l-3 4h3" fill="none" stroke="#111" stroke-width="1.200"/></svg>
  </div>
</div>
<script src="app.js"></script>
</body>
</html>
```
FILE: styles.css
```css
* { box-sizing: border-box; }
body { margin: 0; width: 1920px; height: 1080px; overflow: hidden; position: relative; background: #f3f6f9; font-family: "Noto Sans", sans-serif; font-size: 14px; color: #e9ebee; white-space: nowrap; }
i, em { font-style: normal; }
svg { flex: none; }
.sprite { position: absolute; width: 0; height: 0; }
.logo-a { font: bold 15px "Open Sans", sans-serif; fill: #fff; }
.logo-cad { font: bold 7px "Open Sans", sans-serif; fill: #fff; }
.caret { flex: none; border: 4px solid transparent; border-top: 5px solid #d5d7da; border-bottom: 0; }
.drop { flex: none; border: 5px solid transparent; border-top: 6px solid #dcdee1; border-bottom: 0; }
.up { flex: none; border: 5px solid transparent; border-bottom: 5px solid #dcdee1; border-top: 0; }
.dim { opacity: .6; }

.window { height: 1020px; margin: 0 2px 0 2px; background: #222931; border: 1px solid #1590cf; display: flex; flex-direction: column; }
.titlebar { height: 33px; background: #464f61; display: flex; align-items: center; color: #e0e2e5; }
.brand { display: flex; align-items: center; margin-left: 3px; width: 50px; height: 24px; background: linear-gradient(90deg, #e51050 25px, #7a0c2c 25px); font-family: "Open Sans", sans-serif; }
.brand b { width: 25px; text-align: center; font-size: 18px; padding-left: 4px; color: #fff; }
.brand span { width: 25px; text-align: center; font-size: 9px; font-weight: bold; color: #fff; }
.quick { display: flex; align-items: center; margin-left: 11px; width: 396px; color: #d0d2d5; }
.quick svg { width: 20px; height: 20px; margin-right: 10px; }
.quick .undo { margin-right: 8px; }
.quick .redo { margin: 0 9px 0 9px; transform: scaleX(-1); color: #7b8290; }
.menu-caret { border: 5px solid transparent; border-top: 6px solid #e0e0e0; border-bottom: 0; margin: 5px 10px 0 8px; position: relative; }
.menu-caret::before { content: ""; position: absolute; left: -5px; top: -11px; width: 10px; height: 2px; background: #e0e0e0; }
.quick .plane { margin-right: 5px; }
.share { color: #8cc8f5; font-size: 14.5px; }
.app-title { display: flex; gap: 16px; margin-left: 201px; width: 519px; color: #a4a9b2; letter-spacing: .15px; }
.account { display: flex; align-items: center; margin-left: 13px; width: 559px; }
.play { border: 5px solid transparent; border-left: 5px solid #ddd; border-right: 0; margin-right: 8px; }
.keyword { width: 224px; height: 28px; border: 1px solid #262c36; background: #3b4453; font-style: italic; padding: 3px 4px; margin-right: 3px; letter-spacing: -.5px; color: #bcc0c6; }
.account svg { width: 20px; height: 20px; }
.account .usr { margin: 0 7px 0 11px; }
.user-name { width: 104px; letter-spacing: -.1px; }
.account .cart { width: 19px; margin: 0 10px 0 13px; }
.account .adsk { margin-right: 6px; }
.rule { width: 1px; height: 22px; background: #3a4252; margin: 0 11px 0 12px; }
.help { width: 21px; height: 21px; border-radius: 50%; background: #dcdcdc; color: #464f61; font-weight: bold; text-align: center; line-height: 21px; margin-right: 9px; }
.winbtns { width: 78px; height: 20px; margin-left: 77px; }

.ribbon-tabs { height: 30px; display: flex; align-items: flex-end; color: #c3c7cc; font-size: 14px; line-height: 25px; }
.ribbon-tabs span { flex: none; }
.tab-home { background: #3b4453; width: 64px; height: 25px; margin-left: 7px; text-align: center; color: #fff; }
.t2 { width: 61px; margin-left: 13px; } .t3 { width: 85px; } .t4 { width: 93px; } .t5 { width: 57px; } .t6 { width: 78px; } .t7 { width: 71px; } .t8 { width: 75px; } .t9 { width: 102px; } .t10 { width: 113px; } .t11 { width: 132px; }
.ribbon-min { width: 20px; height: 9px; margin: 0 5px 7px 0; }
.ribbon-tabs .caret { margin-bottom: 9px; }

.ribbon { height: 124px; margin: 0 4px; background: #3b4453; display: flex; color: #7c828e; }
.panel { border-right: 2px solid #2b323d; display: flex; flex-direction: column; height: 122px; margin-top: 1px; }
.panel:last-child { border: 0; }
.panel-body { height: 97px; display: flex; flex: none; }
.dimmed svg, .dimmed .caret { opacity: .62; }
.panel-title { height: 25px; padding-top: 6px; display: flex; align-items: center; justify-content: center; gap: 7px; color: #e9ebee; position: relative; }
.launch { position: absolute; right: 5px; top: 12px; width: 8px; height: 8px; }
.layers { width: 1119px; }
.layers .panel-body { justify-content: flex-end; }
.layers .panel-title { padding-left: 779px; }
.layer-props { width: 80px; height: 89px; margin: 4px 2px 0 0; border: 1px solid #5c9ccc; background: #3f566f; display: flex; flex-direction: column; align-items: center; line-height: 20px; padding: 3px 0 0 4px; }
.layer-props svg { width: 44px; height: 44px; margin-bottom: -1px; }
.layer-tools { width: 263px; padding-top: 5px; }
.combo { height: 28px; border: 1px solid #2d3440; background: #465265; display: flex; align-items: center; padding: 0 2px; }
.layer-combo { width: 261px; gap: 7px; padding: 0 0 0 8px; }
.layer-combo svg { width: 18px; height: 18px; opacity: .6; }
.layer-combo .b { width: 14px; }
.chip { width: 18px; height: 18px; background: #86a732; border: 1px solid #a9b38b; margin-left: 1px; }
.combo span { flex: 1; }
.layer-combo span { margin-left: -1px; }
.tool-row { display: flex; gap: 10px; padding-left: 4px; margin-top: 7px; height: 24px; color: #7b808b; }
.tool-row span, .stk { position: relative; display: block; width: 20px; height: 20px; flex: none; }
.tool-row svg { width: 20px; height: 20px; display: block; }
.tool-row .mark, .pal-tools .stk .mark, .tree .node .stk .mark { position: absolute; right: 0; bottom: 0; width: 10px; height: 10px; }
.block { width: 100px; }
.big { display: flex; flex-direction: column; align-items: center; line-height: 20px; }
.big svg { width: 40px; height: 42px; }
.big .caret { margin-top: 6px; }
.block .big { width: 54px; padding-top: 5px; }
.block .big span { margin-top: 6px; }
.small-col { display: flex; flex-direction: column; gap: 11px; padding: 9px 0 0 2px; color: #a5a8ae; }
.small-col svg { width: 20px; height: 20px; display: block; }
.small-col div { display: flex; align-items: center; gap: 9px; }
.properties { width: 277px; }
.properties .big { width: 78px; padding-top: 6px; }
.properties .big span:first-of-type { margin-top: 6px; }
.properties .panel-title { padding-right: 15px; }
.prop-icons { width: 25px; display: flex; flex-direction: column; gap: 10px; padding: 9px 0 0 2px; }
.prop-icons i { width: 20px; height: 20px; }
.wheel { border-radius: 50%; background: conic-gradient(#ffb13c 0 45deg, #ff6d3c 45deg 95deg, #f0503c 95deg 140deg, #7a4cf0 140deg 215deg, #2fb5d8 215deg 270deg, #5fd089 270deg 315deg, #f5d94c 315deg); }
.weights { background: linear-gradient(#a9adb4 0 1px, transparent 1px 4px, #a9adb4 4px 6px, transparent 6px 9px, #a9adb4 9px 13px, transparent 13px 15px, #a9adb4 15px); }
.dashes { background: repeating-linear-gradient(90deg, transparent 0 3px, #3b4453 3px 4px), repeating-linear-gradient(#a9adb4 0 1px, transparent 1px 4px); opacity: .8; }
.combos { width: 171px; display: flex; flex-direction: column; gap: 3px; padding-top: 5px; }
.combo.off { background: #3f4858; }
.combo.off .drop { opacity: .3; }
.combo.off span { padding-left: 5px; }
.gray-chip { width: 20px; height: 20px; background: #6a6f79; margin-left: 6px; }
.ln { width: 80px; height: 1px; background: #c5c8cd; margin: 0 2px 0 6px; }
.groups { width: 85px; }
.groups .big { width: 52px; padding-top: 7px; }
.groups .big span { margin-top: 5px; }
.groups .small-col { gap: 10px; padding: 9px 0 0 0; }
.groups .pressed { margin-top: -3px; }
.faded { opacity: .6; margin: 0 4px; }
.small-col .pressed { border: 1px solid #5c9ccc; background: #3f566f; width: 30px; height: 27px; padding-top: 3px; }
.utilities { width: 121px; }
.utilities .big { width: 90px; padding-top: 7px; }
.utilities .big span { margin-top: 7px; }
.clipboard { width: 113px; }
.clipboard .panel-title { padding-left: 2px; }
.clipboard .big { width: 67px; padding-top: 7px; }
.clipboard .big span { margin-top: 8px; }
.view { width: 92px; }
.view .big { width: 81px; padding-top: 6px; }
.view .big span { margin-top: 8px; }
.view .panel-title { justify-content: flex-start; padding-left: 7px; }
.view .launch { right: 17px; }
.file-tabs { height: 33px; }

.drawing { height: 725px; margin: 0 4px 0 3px; position: relative; border-top: 5px solid #3b4453; border-bottom: 5px solid #3b4453;
  background: repeating-linear-gradient(90deg, transparent 0 58.2px, #303848 58.2px 59.2px) -29px 0 / 1980px 100%, repeating-linear-gradient(transparent 0 58.2px, #303848 58.2px 59.2px) 0 -1px / 100% 720px, repeating-linear-gradient(90deg, transparent 0 10.84px, #262d37 10.84px 11.84px) -29px 0 / 1980px 100%, repeating-linear-gradient(#222931 0 10.84px, #262d37 10.84px 11.84px) 0 -1px / 100% 720px; }
.vp-label { position: absolute; left: 3px; top: 5px; font-size: 13px; }
.wall { position: absolute; left: 941px; top: 0; width: 98px; height: 50px; }
.docbtns { position: absolute; left: 1834px; top: 9px; width: 64px; height: 18px; }
.cube { position: absolute; left: 1758px; top: 43px; width: 134px; height: 140px; }
.cube .top { font: bold 13px "Liberation Sans", sans-serif; fill: #4e545b; text-anchor: middle; }
.cube .dir { font: bold 20px "Liberation Sans", sans-serif; fill: #b3b4b6; text-anchor: middle; }
.wcs { position: absolute; left: 1796px; top: 199px; width: 57px; height: 21px; border-radius: 5px; background: #8f919f; color: #62656f; font: 13px/21px "Liberation Sans", sans-serif; padding-left: 4px; }
.wcs svg { width: 12px; height: 8px; margin-left: 7px; }
.navbar { position: absolute; left: 1864px; top: 251px; width: 41px; height: 259px; }
.ucs { position: absolute; left: 13px; top: 613px; width: 92px; height: 90px; }
.command { position: absolute; left: 391px; top: 682px; width: 1125px; height: 32px; display: flex; }
.handle { width: 72px; display: flex; align-items: center; background: #2a303c; padding-left: 5px; }
.grip { width: 8px; height: 22px; }
.cx { width: 12px; height: 12px; margin: 0 14px 0 6px; }
.wr { width: 20px; height: 20px; }
.prompt { flex: 1; background: rgba(203,204,206,.9); border-radius: 2px; display: flex; align-items: center; padding: 0 6px 0 5px; color: #66686c; font: italic 15px "DejaVu Sans Mono", "Liberation Mono", monospace; letter-spacing: -.04px; }
.prompt svg { width: 20px; height: 16px; }
.prompt .drop { border-top-color: #444; margin: 0 8px 0 2px; }
.prompt span { flex: 1; padding-top: 1px; }
.prompt .up { border-bottom-color: #444; }

.layout-tabs { height: 37px; display: flex; align-items: flex-start; line-height: 32px; }
.model { margin-left: 13px; width: 86px; height: 30px; background: #3b4453; clip-path: polygon(12px 0, 100% 0, 74px 100%, 0 100%); text-align: center; font-weight: bold; }
.l1 { margin-left: 9px; width: 67px; } .l2 { margin-left: 14px; width: 67px; }
.slash { width: 1px; height: 21px; background: #59616f; transform: skewX(-20deg); margin: 5px 0 0 0; }
.plus { width: 16px; height: 16px; background: linear-gradient(#e4e4e4, #e4e4e4) center / 100% 2px no-repeat, linear-gradient(#e4e4e4, #e4e4e4) center / 2px 100% no-repeat; }
.layout-tabs .plus { margin: 7px 20px 0 16px; }

.status { height: 30px; display: flex; padding-left: 5px; color: #fff; }
.st { background: #3b4453; display: flex; align-items: center; flex: none; }
.st svg { width: 21px; height: 22px; }
.st span { width: 29px; height: 28px; display: flex; align-items: center; justify-content: center; position: relative; color: #dfe1e4; }
.st .on { background: #5f8dbf; color: #fff; }
.blank { width: 1191px; margin-right: 5px; }
.mdl { width: 59px; margin-right: 2px; justify-content: center; font-size: 14.5px; }
.g1 { width: 81px; margin-right: 2px; padding-left: 1px; }
.g1 .drop { margin-left: 7px; }
.g1 svg { width: 19px; }
.g1 .on + span { padding-left: 1px; }
.g2 { width: 130px; margin-right: 1px; }
.g2 .on + span { margin-left: 2px; }
.g2 .drop { margin-left: 6px; } .g2 .drop + span { margin-left: 5px; }
.g3 { width: 80px; margin-right: 4px; }
.g3 .on { margin-right: 3px; }
.g3 .drop { margin-left: 5px; }
.g4 { width: 132px; margin-right: 2px; }
.g4 span + span { width: 30px; }
.g4 em { margin-left: 6px; }
.g4 .drop { margin-left: 4px; margin-right: -5px; }
.ring { position: absolute; right: 2px; top: 4px; width: 8px; height: 8px; border: 1px solid #fff; border-radius: 50%; }
.st .bolt { position: absolute; right: 1px; top: 2px; width: 8px; height: 11px; }
.g5 { width: 50px; margin-right: 1px; padding-left: 5px; color: #dfe1e4; }
.g5 .drop { margin-left: 10px; }
.g6 { width: 30px; margin-right: 3px; justify-content: center; }
.g6 .plus { width: 20px; height: 20px; }
.g7 { width: 30px; margin-right: 3px; justify-content: center; }
.g8 { width: 34px; margin-right: 3px; justify-content: center; }
.st.g8 svg { width: 26px; height: 26px; }
.g9 { width: 60px; padding-left: 5px; gap: 10px; }
.burger { width: 20px; height: 18px; background: linear-gradient(#fff 0 2px, transparent 2px 8px, #fff 8px 10px, transparent 10px 16px, #fff 16px); }

.palette { position: absolute; left: 20px; top: 51px; width: 809px; height: 434px; background: #2f3642; border-radius: 4px; display: flex; padding: 3px 3px 3px 0; box-shadow: 0 0 0 1px #252b35; font-size: 14.5px; letter-spacing: -.08px; }
.rail { width: 29px; display: flex; flex-direction: column; align-items: center; padding-top: 4px; }
.rail svg { width: 12px; height: 12px; margin-bottom: 12px; }
.rail .rail-gear { width: 14px; height: 14px; color: #c4c6ca; margin: -1px 0 0; }
.rail-title { writing-mode: vertical-rl; transform: rotate(180deg); font-size: 13.5px; color: #c9ccd1; height: 206px; margin-top: 125px; text-align: left; letter-spacing: .5px; padding-right: 1px; }
.rail .rail-icon { width: 20px; height: 20px; margin: 13px 0 0; }
.pal-body { flex: 1; background: #3b4453; border: 1px solid #262c36; border-radius: 3px; padding: 9px 3px 0 2px; display: flex; flex-direction: column; min-width: 0; }
.pal-top { display: flex; justify-content: space-between; height: 30px; padding-left: 6px; letter-spacing: -.25px; }
.pal-top > span { padding-top: 4px; }
.layer-search { width: 156px; height: 20px; background: #4b586d; display: flex; justify-content: space-between; align-items: center; padding: 0 2px 0 1px; color: #c5c9cf; letter-spacing: -.15px; margin-right: -1px; }
.layer-search svg { width: 17px; height: 17px; }
.pal-tools { display: flex; align-items: center; height: 24px; margin-bottom: 1px; padding-left: 3px; color: #cdcfd2; }
.pal-tools svg { width: 20px; height: 20px; }
.pal-tools .fo { width: 18px; height: 17px; margin: 0 8px; }
.pal-tools > i { width: 1px; height: 22px; background: #262c36; }
.pal-tools .sta { margin: 0 41px 0 8px; }
.stk { margin-right: 7px; color: #cdcfd2; }
.c-sun { color: #ffd37a; } .c-frz { color: #6fc3d8; } .c-del { color: #e8555a; } .c-ok { color: #6fdc8c; }
.pal-tools .refr { margin-left: 447px; }
.pal-tools .ovr { width: 18px; margin: 0 8px; }
.pal-main { display: flex; gap: 5px; height: 315px; }
.filters { width: 119px; border: 1px solid #2b323d; overflow: hidden; display: flex; flex-direction: column; }
.filters-head { height: 28px; border-bottom: 1px solid #2b323d; display: flex; justify-content: space-between; padding: 3px 5px 0 6px; }
.filters b, .invert b { font-size: 25px; line-height: 18px; font-weight: bold; color: #d4d6d9; }
.tree { flex: 1; padding-top: 5px; }
.node { display: flex; align-items: center; height: 23px; padding-left: 8px; }
.minus { width: 11px; height: 11px; flex: none; border: 1px solid #99a; background: linear-gradient(#345, #345) center / 7px 1px no-repeat #eee; }
.dots { width: 7px; border-top: 1px dotted #bbb; margin: 0 2px; }
.node .stk { width: 15px; height: 16px; margin-right: 5px; }
.tree .node .stk svg { width: 15px; height: 16px; }
.all { background: #7386a5; padding: 0 3px 0 2px; line-height: 22px; }
.child { padding-left: 36px; }
.elbow { width: 13px; height: 13px; border: dotted #bbb; border-width: 0 0 1px 1px; margin: -12px 3px 0 0; flex: none; }
.child svg { width: 15px; height: 15px; margin-right: 8px; }
.child span { letter-spacing: -.2px; }
.filters .scroll.small { height: 19px; width: 114px; margin: 0 0 0 2px; }
.scroll { background: #efefef; height: 21px; display: flex; align-items: center; padding-left: 21px; }
.scroll i { width: 467px; height: 3px; border-radius: 2px; background: #858585; }
.scroll.small i { width: 49px; margin-left: -2px; }
.invert { height: 29px; border-top: 1px solid #2b323d; display: flex; align-items: center; padding: 0 5px; }
.invert i { width: 15px; height: 15px; background: #f4f4f4; border: 1px solid #8b8b8b; border-radius: 3px; margin-right: 5px; }
.invert span { flex: 1; letter-spacing: -.3px; }
.invert b { margin-top: -3px; }
.grid { flex: 1; min-width: 0; overflow: hidden; }
.row { display: grid; grid-template-columns: 23px 92px 2px 23px 23px 23px 23px 60px 80px 85px 68px 23px 121px; height: 23px; align-items: center; }
.row > * { min-width: 0; }
.gap { background: #2b323d; align-self: stretch; }
.head { height: 29px; }
.head span { background: #464f61; height: 29px; line-height: 30px; padding-left: 5px; border-right: 1px solid #2f3744; overflow: hidden; }
.head .nm { display: flex; align-items: center; justify-content: space-between; padding-right: 2px; }
.head .nm .up { border-width: 0 4px 5px; }
.row .ic { display: flex; justify-content: center; padding-right: 2px; }
.row .ic svg { width: 15px; height: 16px; }
.row .ic svg.bl { width: 12px; height: 17px; }
.row .ic svg.ly { width: 16px; height: 8px; margin-right: -1px; }
.row .ic svg.lk { width: 14px; height: 15px; }
.row .name { padding-left: 4px; }
.col { display: flex; align-items: center; gap: 5px; padding-left: 3px; }
.col i { width: 15px; height: 15px; border: 1px solid #e0e0e0; flex: none; }
.lt { padding-left: 3px; }
.lw { display: flex; align-items: center; gap: 6px; padding-left: 1px; letter-spacing: -.3px; }
.lw i { width: 27px; height: 1px; background: #f0f0f0; }
.tr { padding-left: 4px; }
.selected { background: linear-gradient(#7386a5, #7386a5); }
.noplot { opacity: .45; }
.filler { height: 36px; }
.filler .gap { grid-column: 3; }
.pal-status { padding: 21px 0 0 5px; letter-spacing: -.17px; }

.dialog { position: absolute; left: 719px; top: 274px; width: 482px; height: 465px; background: #efefef; border-radius: 8px; overflow: hidden; box-shadow: 0 8px 26px 4px rgba(0,0,0,.4), 0 0 0 1px rgba(80,80,80,.5); color: #111; font: 13.5px "Liberation Sans", sans-serif; display: flex; flex-direction: column; padding: 0 10px 0 6px; }
.dialog header { height: 37px; margin: 0 -10px 0 -6px; background: #f3f3f3; display: flex; align-items: center; padding: 0 15px 0 10px; font: 14px "Noto Sans", sans-serif; }
.dlg-logo { width: 18px; height: 20px; margin-right: 8px; background: linear-gradient(#e51050 14px, #7a0c2c 14px); border-left: 2px solid #f06a8c; color: #fff; font-family: "Open Sans", sans-serif; text-align: center; display: flex; flex-direction: column; }
.dlg-logo b { font-size: 11px; line-height: 14px; }
.dlg-logo em { font-size: 5px; line-height: 6px; font-weight: bold; }
.dlg-title { flex: 1; }
.dialog header .x { width: 13px; height: 13px; }
.dtabs { display: flex; align-items: flex-end; height: 36px; padding-top: 12px; position: relative; z-index: 1; margin-bottom: -1px; }
.dtabs span { width: 118px; height: 22px; border: 1px solid #e3e3e3; border-left: 0; background: #f3f3f3; text-align: center; line-height: 20px; }
.dtabs .cur { width: 124px; height: 24px; background: #f9f9f9; border-left: 1px solid #e3e3e3; border-bottom: 0; line-height: 19px; }
.dtabs span:last-child { padding-left: 2px; }
.dpanel { height: 344px; background: #f9f9f9; border: 1px solid #e3e3e3; padding: 1px 4px 0 7px; }
.dpanel label { display: block; height: 16px; line-height: 18px; padding-left: 6px; }
.aci { width: 452px; height: 168px; background: #f4f4f4; padding: 4px 5px 0 4px; margin-bottom: 26px; }
.cells { display: grid; grid-template-columns: repeat(24, 1fr); grid-template-rows: repeat(5, 1fr); gap: 1px; height: 75px; margin-bottom: 9px; background: #fff; }
.cell { position: relative; }
.picked::after { content: ""; position: absolute; inset: -4px -4px -3px -4px; border: 2px solid #000; box-shadow: 0 0 0 1px #fff, inset 0 0 0 1px #fff; z-index: 1; }
.lower { display: flex; padding-left: 2px; }
.left { width: 256px; margin-right: -13px; }
.swatches { display: flex; gap: 1px; width: 224px; height: 32px; background: #f3f3f3; padding: 4px; }
.swatches i { width: 23px; height: 23px; flex: none; }
#gray { width: 152px; }
.left label { margin-top: 11px; padding-left: 4px; height: 16px; line-height: 16px; }
.field { width: 252px; height: 24px; margin: 1px 0 0 4px; border: 1px solid #e5e5e5; border-bottom: 2px solid #0067c0; padding: 2px; }
.field span { display: block; width: 16px; height: 16px; line-height: 17px; background: #0078d7; color: #fff; }
.right { flex: 1; padding-top: 3px; }
.by { display: flex; gap: 6px; color: #747474; }
.by span { width: 96px; height: 24px; border: 1px solid #e2e2e2; border-radius: 4px; text-align: center; line-height: 23px; }
.preview { width: 86px; height: 78px; margin: 13px 0 0 89px; display: block; }
.buttons { display: flex; justify-content: flex-end; gap: 6px; padding: 12px 7px 0 0; }
.buttons span { width: 98px; height: 26px; border: 1px solid #cfcfcf; border-bottom-color: #b8b8b8; border-radius: 4px; background: #fdfdfd; text-align: center; line-height: 25px; }
.buttons .ok { border: 1px solid #0067c0; }

.taskbar { height: 60px; background: #eee; border-top: 1px solid #c8c8c8; color: #1a1a1a; display: flex; align-items: center; padding-bottom: 2px; }
.weather { display: flex; align-items: center; width: 447px; padding-left: 25px; position: relative; }
.weather svg { width: 31px; height: 36px; margin-right: 8px; margin-top: -8px; }
.weather b { position: absolute; left: 39px; top: -3px; width: 20px; height: 20px; border-radius: 50%; background: #c42b1c; color: #fff; text-align: center; font: 13px/20px "Noto Sans", sans-serif; }
.weather div { display: flex; flex-direction: column; line-height: 20px; }
.sub { color: #666; letter-spacing: .3px; }
.win { width: 29px; height: 29px; }
.search { width: 273px; height: 39px; margin: 0 0 0 18px; border-radius: 20px; background: #fafafa; border: 1px solid #d5d5d5; display: flex; align-items: center; padding: 0 19px 0 13px; color: #555; font-size: 15px; }
.search svg { width: 18px; height: 18px; margin-right: 13px; }
.search span { flex: 1; }
.search .pet { width: 32px; height: 28px; margin: 0; }
.apps { display: flex; margin-left: 3px; }
.apps span { width: 55px; height: 50px; display: flex; align-items: center; justify-content: center; position: relative; }
.apps span > svg { width: 30px; height: 30px; }
.apps .run::after, .apps .active::after { content: ""; position: absolute; bottom: 0; left: 24px; width: 8px; height: 4px; border-radius: 2px; background: #868686; }
.apps b { position: absolute; right: 5px; top: 3px; width: 20px; height: 20px; border-radius: 50%; background: #0078d7; color: #fff; font: 13px/20px "Noto Sans", sans-serif; text-align: center; }
.apps b.dark { background: #0d0d0d; }
.apps .active { width: 48px; background: #f9f9f9; border-radius: 5px; box-shadow: 0 0 0 1px #e0e0e0; margin-left: 4px; }
.apps .active .acad { width: 26px; height: 30px; }
.apps .active::after { width: 20px; left: 14px; background: #0078d7; }
.el { width: 30px; height: 30px; background: #1d3ca8; color: #fff; font: bold 23px/30px "Liberation Sans", sans-serif; text-align: center; }
.word { font: bold 10px "Liberation Sans", sans-serif; fill: #fff; }
.tray { display: flex; align-items: center; margin-left: 89px; }
.tray svg { width: 14px; height: 14px; margin-right: 23px; }
.tray .t20 { width: 20px; height: 20px; margin-right: 20px; }
.tray .wifi { margin-right: 9px; } .tray .vol { margin-right: 10px; } .tray .bat { margin-right: 0; }
.clock { width: 99px; display: flex; flex-direction: column; align-items: flex-end; line-height: 20px; margin-right: 11px; letter-spacing: .25px; }
.tray .bell { width: 17px; height: 18px; margin: 0; }
```
FILE: app.js
```js
const use = (id, cls = "") => `<svg class="${cls}"><use href="#${id}"/></svg>`;

const layers = [
  ["0", "#fff", "wh...", "Defa..."],
  ["Defpoints", "#fff", "wh...", "Defa..."],
  ["DINDING", "#5291a5", "143", "0.18 ..."],
  ["DINDINGG", "#00ffff", "130", "0.15 ..."],
  ["KOLOM", "#a52900", "22", "0.15 ..."],
  ["KUSEN", "#7b52a5", "193", "0.13 ..."],
  ["PONDASI", "#7f4f3f", "25", "0.05 ..."],
  ["PRABOT", "#a55200", "32", "0.00 ..."],
  ["UKURAN", "#bfff00", "60", "Defa..."],
  ["dinding 1", "#bfff00", "60", "Defa..."]
];
document.getElementById("rows").innerHTML = layers.map(([name, color, label, weight], i) => `
  <div class="row${i === 9 ? " selected" : ""}">
    <span class="ic">${name === "UKURAN" ? use("check") : use("row-sheet", "ly")}</span>
    <span class="name">${name}</span><i class="gap"></i>
    <span class="ic">${use("bulb", "bl")}</span><span class="ic">${use("sun")}</span>
    <span class="ic">${use("lock", "lk")}</span><span class="ic">${use("print", name === "Defpoints" ? "noplot" : "")}</span>
    <span class="col"><i style="background:${color}"></i>${label}</span>
    <span class="lt">Continu...</span><span class="lw"><i></i>${weight}</span>
    <span class="tr">0</span><span class="ic">${use("vp")}</span>
  </div>`).join("");

// The index palette: 24 hues, 15 degrees apart, at five brightness levels and two saturations.
function hsv(h, s, v) {
  const f = n => {
    const k = (n + h / 60) % 6;
    return Math.round(255 * v * (1 - s * Math.max(0, Math.min(k, 4 - k, 1))));
  };
  return `rgb(${f(5)},${f(3)},${f(1)})`;
}
const darkBlues = ["#24427c", "#24387c", "#242f7c", "#26267c", "#2e267c", "#38267c"];
const deepest = ["#135817", "#135817", "#135858", "#135858", "#135858", "#131b58", "#131758", "#131358", "#131358", "#1c1358", "#581358", "#581358", "#581358", "#581317", "#581317"];
function fill(id, values, sat) {
  let html = "";
  values.forEach((v, r) => {
    for (let c = 0; c < 24; c++) {
      let color = hsv(c * 15, sat, v);
      if (sat < 1 && r === 3 && c > 12 && c < 19) color = darkBlues[c - 13];
      if (sat < 1 && r === 4 && c > 8) color = deepest[c - 9];
      html += `<i class="cell${sat === 1 && r === 4 && c === 5 ? " picked" : ""}" style="background:${color}"></i>`;
    }
  });
  document.getElementById(id).innerHTML = html;
}
fill("aci-top", [0.15, 0.3, 0.5, 0.65, 1], 1);
fill("aci-bottom", [1, 0.65, 0.5, 0.3, 0.15], 0.5);

const strip = (id, colors) => {
  document.getElementById(id).innerHTML = colors.map(c => `<i style="background:${c}"></i>`).join("");
};
strip("std", ["#f00", "#ff0", "#0f0", "#0ff", "#00f", "#f0f", "#fff", "#808080", "#c0c0c0"]);
strip("gray", ["#000", "#656565", "#666", "#999", "#ccc", "#fff"]);

const tools = (id, marks) => {
  document.getElementById(id).innerHTML = marks.map(([icon, mark]) => `<span>${use(icon)}${mark ? use(mark, "mark") : ""}</span>`).join("");
};
tools("tools-a", [["sheet", "m-bulb"], ["stack", "m-in"], ["sheet", "m-frz"], ["sheet", "m-lock"], ["walk", ""]]);
tools("tools-b", [["stack", "m-bulb"], ["stack", "m-out"], ["stack", "m-sun"], ["sheet", "m-unlock"], ["stack", "m-match"]]);
```
